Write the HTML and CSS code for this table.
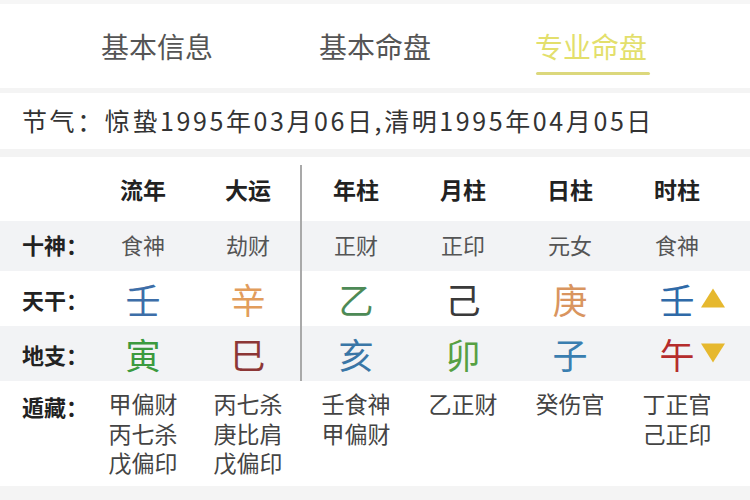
FILE: index.html
```html
<!DOCTYPE html>
<html lang="zh">
<head>
<meta charset="utf-8">
<link rel="stylesheet" href="styles.css">
</head>
<body>
<div class="page">
  <div class="topcut"></div>
  <nav class="tabs">
    <div class="tab">基本信息</div>
    <div class="tab">基本命盘</div>
    <div class="tab active">专业命盘</div>
  </nav>
  <div class="sep"></div>
  <div class="jieqi">节气：惊蛰1995年03月06日,清明1995年04月05日</div>
  <div class="sep2"></div>
  <div class="chart">
    <div class="row head">
      <div class="label"></div>
      <div class="cell">流年</div>
      <div class="cell">大运</div>
      <div class="divider first"></div>
      <div class="cell">年柱</div>
      <div class="cell">月柱</div>
      <div class="cell">日柱</div>
      <div class="cell">时柱</div>
    </div>
    <div class="row shishen gray">
      <div class="label">十神：</div>
      <div class="cell">食神</div>
      <div class="cell">劫财</div>
      <div class="divider"></div>
      <div class="cell">正财</div>
      <div class="cell">正印</div>
      <div class="cell">元女</div>
      <div class="cell">食神</div>
    </div>
    <div class="row big">
      <div class="label">天干：</div>
      <div class="cell"><span class="c-blue">壬</span></div>
      <div class="cell"><span class="c-orange">辛</span></div>
      <div class="divider"></div>
      <div class="cell"><span class="c-dgreen">乙</span></div>
      <div class="cell"><span class="c-dark">己</span></div>
      <div class="cell"><span class="c-orange2">庚</span></div>
      <div class="cell"><span class="c-blue2 marked">壬<i class="tri up"></i></span></div>
    </div>
    <div class="row big gray">
      <div class="label">地支：</div>
      <div class="cell"><span class="c-green">寅</span></div>
      <div class="cell"><span class="c-maroon">巳</span></div>
      <div class="divider last"></div>
      <div class="cell"><span class="c-blue3">亥</span></div>
      <div class="cell"><span class="c-lgreen">卯</span></div>
      <div class="cell"><span class="c-blue4">子</span></div>
      <div class="cell"><span class="c-red marked">午<i class="tri down"></i></span></div>
    </div>
    <div class="row cang">
      <div class="label">遁藏：</div>
      <div class="cell"><div class="ln">甲偏财</div><div class="ln">丙七杀</div><div class="ln">戊偏印</div></div>
      <div class="cell"><div class="ln">丙七杀</div><div class="ln">庚比肩</div><div class="ln">戊偏印</div></div>
      <div class="nodiv"></div>
      <div class="cell"><div class="ln">壬食神</div><div class="ln">甲偏财</div></div>
      <div class="cell"><div class="ln">乙正财</div></div>
      <div class="cell"><div class="ln">癸伤官</div></div>
      <div class="cell"><div class="ln">丁正官</div><div class="ln">己正印</div></div>
    </div>
  </div>
  <div class="bottom"></div>
</div>
</body>
</html>
```

FILE: styles.css
```css
* { box-sizing: border-box; }
html, body { margin: 0; padding: 0; background: #fff; }
body {
  font-family: "Noto Sans CJK SC", "Noto Sans", sans-serif;
  color: #333;
  width: 750px;
  height: 500px;
  overflow: hidden;
}
.page { width: 750px; }
.topcut { height: 4px; background: #f6f6f6; }
.tabs {
  height: 84px;
  display: grid;
  grid-template-columns: 157px 218px 216px 159px;
  align-items: start;
}
.tab {
  font-size: 28px;
  line-height: 30px;
  color: #555;
  padding-top: 27px;
  justify-self: end;
  transform: translateX(57px);
  width: 114px;
  text-align: center;
}
.tab.active {
  color: #e3df6c;
  position: relative;
}
.tab.active::after {
  content: "";
  position: absolute;
  left: 2px;
  right: -2px;
  top: 68px;
  height: 3px;
  background: #dcd87c;
  border-radius: 2px;
}
.sep { height: 5px; background: #f4f4f4; }
.jieqi {
  height: 56px;
  padding-left: 22px;
  font-size: 25px;
  letter-spacing: 2.6px;
  line-height: 54px;
  color: #333;
  white-space: nowrap;
}
.sep2 { height: 8px; background: #f3f3f3; }
.chart { width: 750px; }
.row {
  display: grid;
  grid-template-columns: 90px 106px 104px 2px 108px 106px 108px 106px;
  align-items: center;
}
.row.gray { background: #f2f3f5; }
.label {
  padding-left: 22px;
  font-size: 22px;
  font-weight: 700;
  color: #222;
  white-space: nowrap;
}
.cell { text-align: center; white-space: nowrap; }
.divider { align-self: stretch; background: #a9a9a9; width: 2px; }
.divider.first { margin-top: 8px; }
.head { height: 64px; }
.head .cell { font-size: 23px; font-weight: 700; color: #222; }
.shishen { height: 50px; }
.shishen .label { margin-top: -4px; }
.shishen .cell { font-size: 22px; color: #555; margin-top: -4px; }
.big { height: 55px; }
.big .cell { font-size: 35px; line-height: 40px; }
.marked { position: relative; }
.tri {
  position: absolute;
  left: calc(100% + 6px);
  top: 50%;
  width: 0;
  height: 0;
  border-left: 12px solid transparent;
  border-right: 12px solid transparent;
}
.tri.up { border-bottom: 19px solid #e6b82e; transform: translateY(-50%); }
.tri.down { border-top: 19px solid #e6b82e; transform: translateY(-50%); }
.cang { height: 105px; align-items: start; padding-top: 10px; }
.cang .label { line-height: 30px; }
.cang .cell {
  font-family: "Liberation Sans", "Noto Sans CJK SC", sans-serif;
  font-size: 23px;
  color: #444;
}
.ln { height: 29.5px; line-height: 29.5px; }
.bottom { height: 20px; background: #f4f4f4; }

.c-blue { color: #3d6ea8; }
.c-orange { color: #e29d5c; }
.c-dgreen { color: #4d8a56; }
.c-dark { color: #3a3a3a; }
.c-orange2 { color: #d9955f; }
.c-blue2 { color: #2f6aa8; }
.c-green { color: #3c9a3e; }
.c-maroon { color: #8c3636; }
.c-blue3 { color: #3a76a6; }
.c-lgreen { color: #56a043; }
.c-blue4 { color: #3a7eb0; }
.c-red { color: #b52c2c; }
```
